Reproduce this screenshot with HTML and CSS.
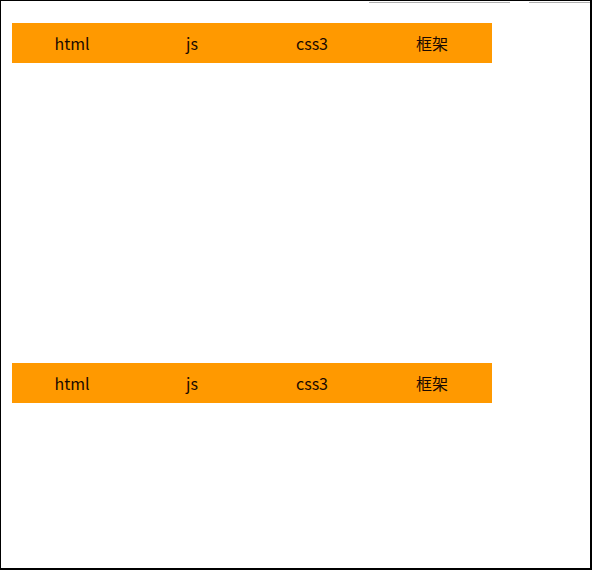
FILE: index.html
```html
<!DOCTYPE html>
<html lang="zh">
<head>
<meta charset="utf-8">
<title>tabs</title>
<link rel="stylesheet" href="styles.css">
</head>
<body>
<div class="frame">
  <div class="btn btn-a"></div>
  <div class="btn btn-b"></div>
  <div class="tabs">
    <div class="tab-bar">
      <span class="tab">html</span>
      <span class="tab">js</span>
      <span class="tab">css3</span>
      <span class="tab">框架</span>
    </div>
    <div class="tab-body"></div>
  </div>
  <div class="tabs">
    <div class="tab-bar">
      <span class="tab">html</span>
      <span class="tab">js</span>
      <span class="tab">css3</span>
      <span class="tab">框架</span>
    </div>
    <div class="tab-body"></div>
  </div>
</div>
</body>
</html>
```
FILE: styles.css
```css
html, body {
  margin: 0;
  padding: 0;
  background: #fff;
}
.frame {
  position: relative;
  box-sizing: border-box;
  width: 592px;
  height: 570px;
  border: 1px solid #000;
  border-right-width: 2px;
  border-bottom-width: 2px;
  padding: 22px 0 0 11px;
  font-family: "Noto Sans CJK SC", "Noto Sans", sans-serif;
  overflow: hidden;
}
.btn {
  position: absolute;
  top: -1px;
  height: 3px;
  background: #fff;
  border-bottom: 1px solid #b0b0b0;
  box-sizing: border-box;
}
.btn-a {
  left: 368px;
  width: 141px;
}
.btn-b {
  left: 528px;
  width: 70px;
}
.tabs {
  width: 480px;
}
.tab-bar {
  display: flex;
  height: 40px;
  background: #ff9900;
}
.tab {
  flex: 1;
  text-align: center;
  line-height: 40px;
  font-size: 16px;
  color: #1a0a00;
}
.tab-body {
  height: 300px;
}
```
